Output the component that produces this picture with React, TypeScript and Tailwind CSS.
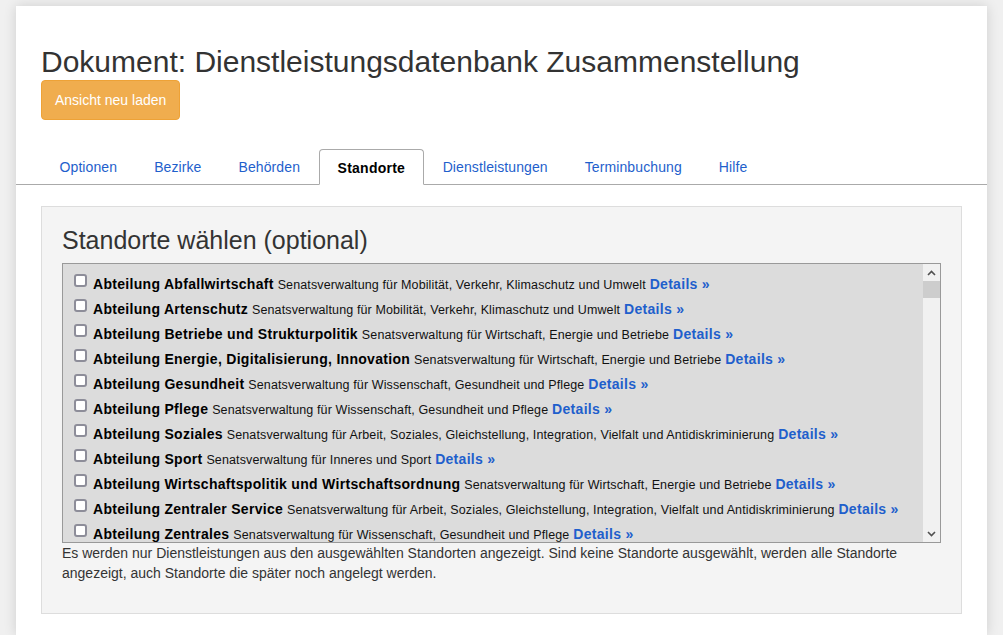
import React from "react";

type Standort = { name: string; behoerde: string };

const STANDORTE: Standort[] = [
  { name: "Abteilung Abfallwirtschaft", behoerde: "Senatsverwaltung für Mobilität, Verkehr, Klimaschutz und Umwelt" },
  { name: "Abteilung Artenschutz", behoerde: "Senatsverwaltung für Mobilität, Verkehr, Klimaschutz und Umwelt" },
  { name: "Abteilung Betriebe und Strukturpolitik", behoerde: "Senatsverwaltung für Wirtschaft, Energie und Betriebe" },
  { name: "Abteilung Energie, Digitalisierung, Innovation", behoerde: "Senatsverwaltung für Wirtschaft, Energie und Betriebe" },
  { name: "Abteilung Gesundheit", behoerde: "Senatsverwaltung für Wissenschaft, Gesundheit und Pflege" },
  { name: "Abteilung Pflege", behoerde: "Senatsverwaltung für Wissenschaft, Gesundheit und Pflege" },
  {
    name: "Abteilung Soziales",
    behoerde: "Senatsverwaltung für Arbeit, Soziales, Gleichstellung, Integration, Vielfalt und Antidiskriminierung",
  },
  { name: "Abteilung Sport", behoerde: "Senatsverwaltung für Inneres und Sport" },
  { name: "Abteilung Wirtschaftspolitik und Wirtschaftsordnung", behoerde: "Senatsverwaltung für Wirtschaft, Energie und Betriebe" },
  {
    name: "Abteilung Zentraler Service",
    behoerde: "Senatsverwaltung für Arbeit, Soziales, Gleichstellung, Integration, Vielfalt und Antidiskriminierung",
  },
  { name: "Abteilung Zentrales", behoerde: "Senatsverwaltung für Wissenschaft, Gesundheit und Pflege" },
];

const TABS = ["Optionen", "Bezirke", "Behörden", "Standorte", "Dienstleistungen", "Terminbuchung", "Hilfe"];

function Tab({ label, active }: { label: string; active: boolean }) {
  if (active) {
    return (
      <div className="h-[36px] -mb-px px-[18px] leading-[37px] bg-white border border-[#aaaaaa] border-b-white rounded-t-[4px] font-bold text-black tracking-[0.25px]">
        {label}
      </div>
    );
  }
  return <div className="h-[35px] px-[18.5px] leading-[37px] text-[#1f5fcc] tracking-[0.1px]">{label}</div>;
}

function Row({ s }: { s: Standort }) {
  return (
    <div className="h-[25px] leading-[25px] flex items-start whitespace-nowrap">
      <span className="mt-[2px] w-[13px] h-[13px] shrink-0 rounded-[3px] border-2 border-[#8d8d99] bg-white" />
      <div className="ml-[6px]">
        <span className="text-[14px] font-bold text-black tracking-[0.3px]">{s.name}</span>{" "}
        <span className="text-[12.5px] text-[#111] tracking-[0.12px]">{s.behoerde}</span>{" "}
        <span className="text-[14px] font-bold text-[#1f5fcc] tracking-[0.3px]">Details »</span>
      </div>
    </div>
  );
}

function FakeScrollbar() {
  return (
    <div className="w-[17px] shrink-0 bg-[#f1f1f1] flex flex-col">
      <div className="h-[17px] flex items-center justify-center">
        <svg width="9" height="6" viewBox="0 0 9 6">
          <path d="M1 5 L4.5 1.5 L8 5" fill="none" stroke="#505050" strokeWidth="1.6" />
        </svg>
      </div>
      <div className="h-[17px] bg-[#cdcdcd]" />
      <div className="flex-1" />
      <div className="h-[17px] flex items-center justify-center">
        <svg width="9" height="6" viewBox="0 0 9 6">
          <path d="M1 1 L4.5 4.5 L8 1" fill="none" stroke="#505050" strokeWidth="1.6" />
        </svg>
      </div>
    </div>
  );
}

export default function App() {
  return (
    <div className="min-h-[635px] bg-[#f0f0f0] pt-[6px] px-[16px] font-['Liberation_Sans',Arial,sans-serif] text-[14px] text-[#333]">
      <div className="bg-white min-h-[629px] shadow-[0_0_12px_rgba(0,0,0,0.14)]">
        <div className="px-[25px] pt-[39px]">
          <h1 className="text-[30px] leading-[33px] text-[#333]">Dokument: Dienstleistungsdatenbank Zusammenstellung</h1>
          <button className="mt-[2px] h-[40px] px-[13px] rounded-[4px] bg-[#f0ad4e] border border-[#eea236] text-white text-[14px] leading-[20px]">
            Ansicht neu laden
          </button>
        </div>

        <div className="mt-[29px] border-b border-[#aaaaaa] px-[25px] flex items-end">
          {TABS.map((t) => (
            <Tab key={t} label={t} active={t === "Standorte"} />
          ))}
        </div>

        <div className="px-[25px] pt-[21px]">
          <div className="bg-[#f4f4f4] border border-[#dddddd] px-[20px] pt-[19px] pb-[30px]">
            <h3 className="text-[25px] leading-[28px] text-[#333] mb-[9px]">Standorte wählen (optional)</h3>
            <div className="h-[280px] border border-[#999999] bg-[#dcdcdc] flex overflow-hidden">
              <div className="flex-1 min-w-0 pl-[11px] pt-[8px] overflow-hidden">
                {STANDORTE.map((s) => (
                  <Row key={s.name} s={s} />
                ))}
              </div>
              <FakeScrollbar />
            </div>
            <p className="leading-[20px] text-[#333]">
              Es werden nur Dienstleistungen aus den ausgewählten Standorten angezeigt. Sind keine Standorte ausgewählt,
              werden alle Standorte angezeigt, auch Standorte die später noch angelegt werden.
            </p>
          </div>
        </div>
      </div>
    </div>
  );
}
